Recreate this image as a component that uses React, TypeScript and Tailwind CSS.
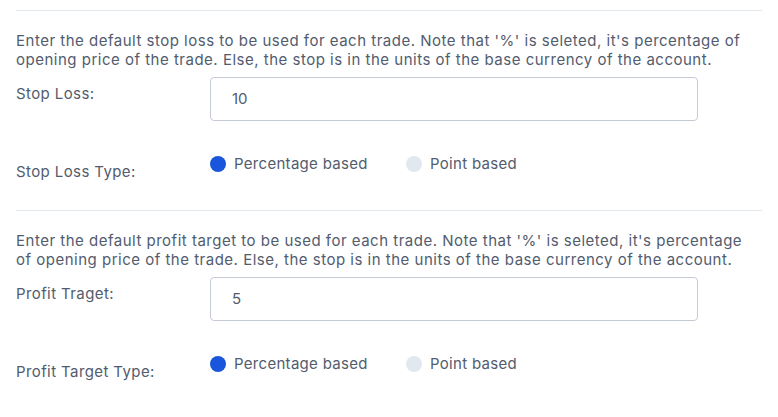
import React from "react";

function Radio({ checked, label }: { checked: boolean; label: string }) {
  return (
    <div className="flex items-center">
      <span
        className={
          checked
            ? "w-4 h-4 rounded-full bg-[#1a56db]"
            : "w-4 h-4 rounded-full bg-[#e2e8f0]"
        }
      />
      <span className="ml-2 text-[15px] text-[#525c6e] tracking-[0.3px]">{label}</span>
    </div>
  );
}

function Section({
  desc,
  label,
  value,
  typeLabel,
}: {
  desc: string;
  label: string;
  value: string;
  typeLabel: string;
}) {
  return (
    <div className="h-[200px] pt-[10px]">
      <div className="h-px bg-[#e2e8f0]" />
      <p className="mt-[20px] text-[15px] leading-[19px] text-[#525c6e] tracking-[0.5px] pr-3">{desc}</p>
      <div className="mt-[8px] flex items-start">
        <div className="w-[194px] pt-[6px] text-[15px] text-[#525c6e] tracking-[0.4px]">{label}</div>
        <div className="w-[488px] h-[44px] border border-[#c5cbd6] rounded-[4px] flex items-center pl-[21px] text-[15px] text-[#525c6e]">
          {value}
        </div>
      </div>
      <div className="mt-[32px] flex items-start">
        <div className="w-[194px] pt-[8px] text-[15px] text-[#525c6e] tracking-[0.4px]">{typeLabel}</div>
        <div className="flex items-start">
          <div className="w-[196px]">
            <Radio checked label="Percentage based" />
          </div>
          <Radio checked={false} label="Point based" />
        </div>
      </div>
    </div>
  );
}

export default function App() {
  return (
    <div
      className="w-[778px] h-[417px] bg-white px-4 overflow-hidden"
      style={{ fontFamily: "Inter, sans-serif" }}
    >
      <Section
        desc="Enter the default stop loss to be used for each trade. Note that '%' is seleted, it's percentage of opening price of the trade. Else, the stop is in the units of the base currency of the account."
        label="Stop Loss:"
        value="10"
        typeLabel="Stop Loss Type:"
      />
      <Section
        desc="Enter the default profit target to be used for each trade. Note that '%' is seleted, it's percentage of opening price of the trade. Else, the stop is in the units of the base currency of the account."
        label="Profit Traget:"
        value="5"
        typeLabel="Profit Target Type:"
      />
    </div>
  );
}
